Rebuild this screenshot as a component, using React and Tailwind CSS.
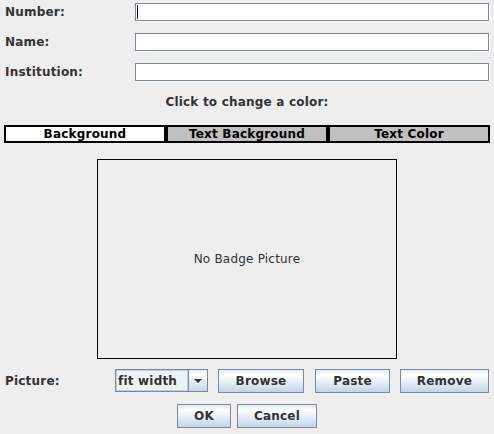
import React from "react";

const font = { fontFamily: '"DejaVu Sans", Verdana, sans-serif' };

const btn =
  "h-[24px] shrink-0 flex items-center justify-center border border-[#7a8a99] bg-gradient-to-b from-[#e2ebf5] via-[#ffffff] via-25% to-[#c2d4e7] text-[12px] font-bold text-[#333333]";

function Field({ label, caret }) {
  return (
    <div className="flex items-center h-[18px]">
      <div className="w-[135px] shrink-0 pl-[5px] text-[12px] font-bold text-[#333333]">{label}</div>
      <div className="relative w-[354px] shrink-0 h-[18px] bg-white border border-[#7a8a99] shadow-[1px_1px_0_#ffffff]">
        {caret && <div className="absolute left-[1px] top-[1px] w-[1px] h-[14px] bg-black" />}
      </div>
    </div>
  );
}

export default function App() {
  return (
    <div className="w-[494px] h-[434px] bg-[#eeeeee] overflow-hidden tracking-[0.2px]" style={font}>
      <div className="pt-[3px] flex flex-col gap-[12px]">
        <Field label="Number:" caret />
        <Field label="Name:" />
        <Field label="Institution:" />
      </div>

      <div className="mt-[13px] h-[16px] leading-[16px] text-center text-[12px] font-bold text-[#333333]">
        Click to change a color:
      </div>

      <div className="mt-[15px] ml-[4px] w-[486px] h-[18px] grid grid-cols-3 text-[12px] font-bold text-black">
        <div className="border-2 border-black bg-white flex items-center justify-center leading-none">Background</div>
        <div className="border-2 border-black bg-[#c0c0c0] flex items-center justify-center leading-none">Text Background</div>
        <div className="border-2 border-black bg-[#c0c0c0] flex items-center justify-center leading-none">Text Color</div>
      </div>

      <div className="mt-[16px] mx-auto w-[300px] h-[200px] border border-black flex items-center justify-center text-[12px] text-[#333333]">
        No Badge Picture
      </div>

      <div className="mt-[10px] flex items-center h-[24px]">
        <div className="w-[115px] shrink-0 pl-[5px] text-[12px] font-bold text-[#333333]">Picture:</div>
        <div className="flex w-[93px] shrink-0 h-[23px] border border-[#7a8a99] self-start">
          <div className="flex-1 flex items-center pl-[1px] bg-[#eef1f5] border border-[#b8cfe5] text-[12px] font-bold text-[#333333]">
            fit width
          </div>
          <div className="w-[19px] flex items-center justify-center border-l border-[#7a8a99] bg-gradient-to-b from-[#e2ebf5] via-[#ffffff] via-25% to-[#c2d4e7]">
            <svg width="8" height="4" viewBox="0 0 8 4">
              <path d="M0 0 H8 L4 4 Z" fill="#333333" />
            </svg>
          </div>
        </div>
        <div className={btn + " ml-[10px] w-[86px]"}>Browse</div>
        <div className={btn + " ml-[11px] w-[75px]"}>Paste</div>
        <div className={btn + " ml-[10px] w-[89px]"}>Remove</div>
      </div>

      <div className="mt-[11px] flex justify-center gap-[6px]">
        <div className={btn + " w-[54px]"}>OK</div>
        <div className={btn + " w-[80px]"}>Cancel</div>
      </div>
    </div>
  );
}
